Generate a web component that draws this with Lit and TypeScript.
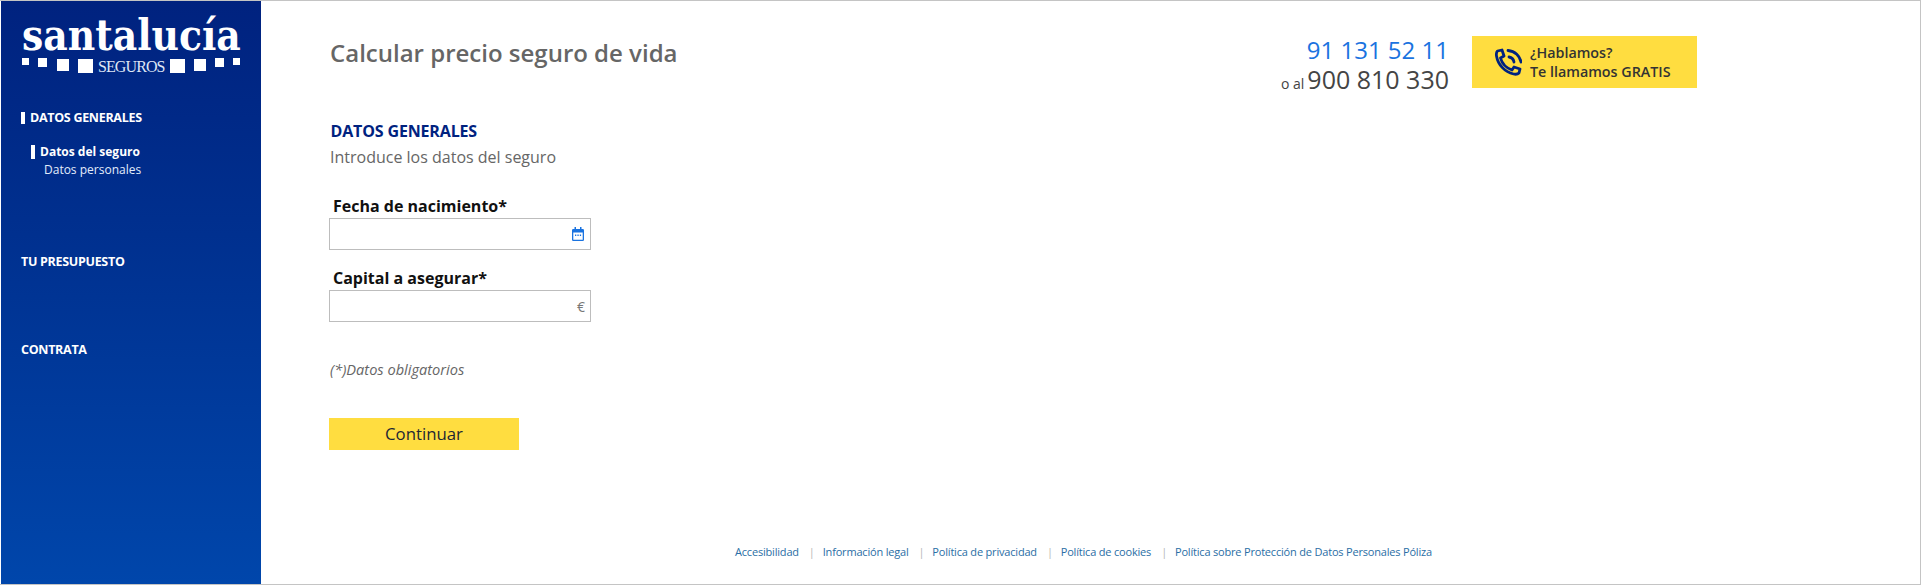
import { LitElement, html, css } from "lit";
import { customElement } from "lit/decorators.js";

@customElement("app-root")
export class AppRoot extends LitElement {
  static styles = css`
    :host { display: block; width: 1922px; height: 586px; font-family: "Open Sans", sans-serif; }
    * { box-sizing: border-box; }
    .page { width: 1921px; height: 585px; display: flex; background: #fff; border-top: 1px solid #c4c4c4; border-right: 1px solid #c4c4c4; border-bottom: 1px solid #c4c4c4; padding-left: 1px; }
    .side { width: 260px; flex: none; background: linear-gradient(180deg, #00227f 0%, #00308f 40%, #0046ab 100%); color: #fff; padding: 0 0 0 20px; display: flex; flex-direction: column; }
    .logo { width: 220px; height: 75px; margin-top: 15px; display: flex; flex-direction: column; }
    .logo-name { font-family: "DejaVu Serif", serif; font-stretch: condensed; font-weight: 700; font-size: 42px; line-height: 40px; height: 40px; letter-spacing: 0; margin-left: 1px; white-space: nowrap; }
    .logo-row { display: flex; align-items: flex-start; margin-top: 2px; height: 16px; margin-left: 1px; }
    .sq { background: #fff; flex: none; }
    .seguros { font-family: "Liberation Serif", serif; font-size: 16px; line-height: 15px; letter-spacing: -0.9px; color: #dfe6f5; margin: 1px 5px 0 5px; }
    .sec { font-size: 12.5px; font-weight: 700; line-height: 18px; letter-spacing: -0.3px; white-space: nowrap; }
    .sec.first { margin-top: 18px; display: flex; align-items: center; }
    .bar { width: 4px; height: 12px; background: #fff; margin-right: 5px; flex: none; }
    .sub { margin-top: 16px; margin-left: 10px; font-size: 12px; line-height: 18px; white-space: nowrap; }
    .sub .on { font-weight: 700; display: flex; align-items: center; }
    .sub .on .bar { height: 14px; }
    .sub .off { padding-left: 13px; color: #e3ecfb; }
    .sec.tu { margin-top: 74px; }
    .sec.co { margin-top: 70px; }
    .main { flex: 1; position: relative; display: flex; flex-direction: column; padding: 0 0 0 68px; }
    .head { display: flex; align-items: flex-start; padding: 35px 223px 0 0; height: 119px; }
    h1 { flex: 1; margin: 1px 0 0; padding: 0 0 0 1px; font-size: 24px; line-height: 32px; font-weight: 600; color: #666; white-space: nowrap; }
    .phones { display: flex; flex-direction: column; align-items: flex-end; flex: none; white-space: nowrap; margin-top: -1px; }
    .p1 { font-size: 24px; line-height: 30px; color: #1a73e0; letter-spacing: 0; }
    .p2 { font-size: 25px; line-height: 29px; font-weight: 500; color: #444; }
    .p2 small { font-size: 14px; font-weight: 400; margin-right: 3px; }
    .call { margin-left: 23px; width: 225px; height: 52px; background: #ffdd40; display: flex; align-items: center; padding-left: 22px; flex: none; }
    .call svg { width: 28px; height: 28px; margin-right: 8px; flex: none; }
    .call div { font-size: 14.3px; line-height: 19px; font-weight: 600; color: #333; white-space: nowrap; }
    h2 { margin: 0; padding-left: 1.5px; font-size: 16px; line-height: 22px; font-weight: 700; color: #00227f; letter-spacing: -0.15px; }
    .intro { margin-top: 4px; padding-left: 1px; font-size: 16px; line-height: 22px; color: #666; }
    label { display: block; padding-left: 4px; font-size: 16px; line-height: 22px; font-weight: 700; color: #111; white-space: nowrap; }
    .l1 { margin-top: 27px; }
    .l2 { margin-top: 17px; }
    .field { margin-top: 1px; width: 262px; height: 32px; border: 1px solid #bdbdbd; display: flex; align-items: center; justify-content: flex-end; padding-right: 5px; background: #fff; }
    .field svg { width: 12px; height: 14px; margin-right: 1px; }
    .eur { font-size: 14px; color: #777; }
    .req { margin-top: 37px; padding-left: 1px; font-size: 14.6px; line-height: 20px; font-style: italic; color: #666; }
    button { display: block; margin-top: 39px; width: 190px; height: 32px; border: 0; padding: 0; background: #ffdd40; font: 500 16.8px/32px "Open Sans", sans-serif; color: #1d2733; }
    footer { position: absolute; left: 474px; top: 543px; display: flex; font-size: 11px; line-height: 16px; color: #2a6ea5; white-space: nowrap; letter-spacing: -0.19px; }
    footer i { font-style: normal; color: #b5b5b5; margin: 0 8px 0 10px; }
  `;

  render() {
    return html`<div class="page">
      <aside class="side">
        <div class="logo">
          <div class="logo-name">santalucía</div>
          <div class="logo-row">
            <span class="sq" style="width:7px;height:7px;margin-right:9px"></span>
            <span class="sq" style="width:9px;height:9px;margin-right:10px"></span>
            <span class="sq" style="width:12px;height:12px;margin-right:9px;margin-top:1px"></span>
            <span class="sq" style="width:15px;height:14px;margin-top:1px"></span>
            <span class="seguros">SEGUROS</span>
            <span class="sq" style="width:15px;height:14px;margin-right:9px;margin-top:1px"></span>
            <span class="sq" style="width:12px;height:12px;margin-right:9px;margin-top:1px"></span>
            <span class="sq" style="width:9px;height:9px;margin-right:9px"></span>
            <span class="sq" style="width:7px;height:7px"></span>
          </div>
        </div>
        <div class="sec first"><span class="bar"></span>DATOS GENERALES</div>
        <div class="sub">
          <div class="on"><span class="bar"></span>Datos del seguro</div>
          <div class="off">Datos personales</div>
        </div>
        <div class="sec tu">TU PRESUPUESTO</div>
        <div class="sec co">CONTRATA</div>
      </aside>
      <main class="main">
        <div class="head">
          <h1>Calcular precio seguro de vida</h1>
          <div class="phones">
            <div class="p1">91 131 52 11</div>
            <div class="p2"><small>o al</small>900 810 330</div>
          </div>
          <div class="call">
            <svg viewBox="0 0 28 28" fill="none" stroke="#00227f" stroke-width="2.8" stroke-linecap="round" stroke-linejoin="round">
              <path d="M3.5 3 8 2 10 8 6.5 10C8 15.5 12.5 20 18 22L20 19 26 21 25 25C24 26 22 26.5 19.5 26 11 24 4 17 2.5 8 2.2 6 2.5 4 3.5 3Z"/>
              <path d="M15 9C17.8 9.5 19.5 11.2 20 14"/>
              <path d="M14 2.5C21 3 26 8 27 14"/>
            </svg>
            <div>¿Hablamos?<br />Te llamamos GRATIS</div>
          </div>
        </div>
        <h2>DATOS GENERALES</h2>
        <div class="intro">Introduce los datos del seguro</div>
        <label class="l1">Fecha de nacimiento*</label>
        <div class="field">
          <svg viewBox="0 0 12 14">
            <path fill="#1a73e0" d="M2.5 0H4V2H8V0H9.5V2H10.8A1.2 1.2 0 0 1 12 3.2V12.8A1.2 1.2 0 0 1 10.8 14H1.2A1.2 1.2 0 0 1 0 12.8V3.2A1.2 1.2 0 0 1 1.2 2H2.5ZM1.3 5.5V12.7H10.7V5.5Z"/>
            <path fill="#1a73e0" d="M3 7.5H4.3V9H3ZM5.4 7.5H6.7V9H5.4ZM7.8 7.5H9.1V9H7.8Z"/>
          </svg>
        </div>
        <label class="l2">Capital a asegurar*</label>
        <div class="field"><span class="eur">€</span></div>
        <div class="req">(*)Datos obligatorios</div>
        <button>Continuar</button>
        <footer>
          <span>Accesibilidad</span><i>|</i><span>Información legal</span><i>|</i><span>Política de privacidad</span><i>|</i><span>Política de cookies</span><i>|</i><span>Política sobre Protección de Datos Personales Póliza</span>
        </footer>
      </main>
    </div>`;
  }
}
